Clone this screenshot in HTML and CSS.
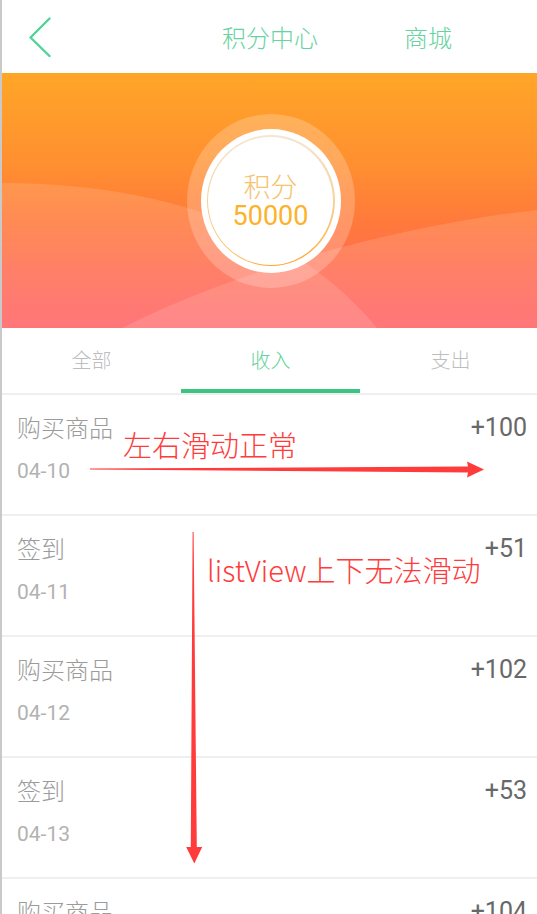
FILE: index.html
```html
<!DOCTYPE html>
<html lang="zh-CN">
<head>
<meta charset="utf-8">
<title>积分中心</title>
<link rel="stylesheet" href="styles.css">
</head>
<body>
<div class="phone">
  <header class="topbar">
    <svg class="back" width="24" height="40" viewBox="0 0 24 40" aria-hidden="true">
      <polyline points="20.5,1.5 1.5,20.5 20.5,39" fill="none" stroke="#4fd497" stroke-width="2.4" stroke-linecap="round" stroke-linejoin="round"/>
    </svg>
    <span class="title">积分中心</span>
    <span class="shop">商城</span>
  </header>

  <section class="banner">
    <svg class="waves" viewBox="0 0 535 255" preserveAspectRatio="none" aria-hidden="true">
      <path d="M0,110 C148,110 288,150 375,255 L0,255 Z" fill="rgba(255,255,255,0.13)"/>
      <path d="M535,137 C418,150 248,190 120,255 L535,255 Z" fill="rgba(255,255,255,0.13)"/>
    </svg>
    <div class="halo">
      <div class="disc">
        <div class="ring">
          <div class="ring-inner">
            <div class="label">积分</div>
            <div class="points">50000</div>
          </div>
        </div>
      </div>
    </div>
  </section>

  <nav class="tabs">
    <div class="tab">全部</div>
    <div class="tab active">收入</div>
    <div class="tab last">支出</div>
  </nav>

  <ul class="records">
    <li class="record">
      <div class="rec-title">购买商品</div>
      <div class="rec-amount">+100</div>
      <div class="rec-date">04-10</div>
    </li>
    <li class="record">
      <div class="rec-title">签到</div>
      <div class="rec-amount">+51</div>
      <div class="rec-date">04-11</div>
    </li>
    <li class="record">
      <div class="rec-title">购买商品</div>
      <div class="rec-amount">+102</div>
      <div class="rec-date">04-12</div>
    </li>
    <li class="record">
      <div class="rec-title">签到</div>
      <div class="rec-amount">+53</div>
      <div class="rec-date">04-13</div>
    </li>
    <li class="record">
      <div class="rec-title">购买商品</div>
      <div class="rec-amount">+104</div>
      <div class="rec-date">04-14</div>
    </li>
  </ul>

  <svg class="annot" width="537" height="914" viewBox="0 0 537 914" aria-hidden="true">
    <polygon points="90,468.6 468,466.6 467,461.5 484,469.5 467,477.5 468,472.4 90,469.6" fill="#ff3b3b"/>
    <polygon points="192.6,532 193.6,532 196.8,847 202.2,847 194.3,863.5 186.2,847 190.8,847" fill="#ff3b3b"/>
  </svg>
  <div class="note note-h">左右滑动正常</div>
  <div class="note note-v">listView上下无法滑动</div>
</div>
</body>
</html>
```
FILE: styles.css
```css
* { box-sizing: border-box; }

html, body {
  margin: 0;
  padding: 0;
  background: #ffffff;
}

.phone {
  position: relative;
  width: 537px;
  height: 914px;
  overflow: hidden;
  border-left: 2px solid #c9c9c9;
  background: #ffffff;
  font-family: "Noto Sans CJK SC", "Noto Sans", sans-serif;
}

/* header */
.topbar {
  height: 73px;
  display: flex;
  align-items: center;
  padding-left: 27px;
  background: #ffffff;
}
.back { display: block; flex: none; }
.title, .shop {
  font-size: 24px;
  line-height: 30px;
  font-weight: 300;
  color: #66d3a0;
}
.title { margin-left: 169px; }
.shop { margin-left: 86px; }

/* banner */
.banner {
  position: relative;
  height: 255px;
  display: flex;
  align-items: center;
  justify-content: center;
  background: linear-gradient(180deg, #ffa627 0%, #ff9030 35%, #ff7a3b 58%, #ff6d52 78%, #ff6266 100%);
  overflow: hidden;
}
.waves {
  position: absolute;
  left: 0;
  top: 0;
  width: 100%;
  height: 100%;
}
.halo {
  position: relative;
  width: 168px;
  height: 174px;
  border-radius: 50%;
  background: rgba(255, 255, 255, 0.22);
  display: flex;
  align-items: center;
  justify-content: center;
  margin-left: 2px;
}
.disc {
  width: 140px;
  height: 144px;
  border-radius: 50%;
  background: #ffffff;
  display: flex;
  align-items: center;
  justify-content: center;
}
.ring {
  width: 128px;
  height: 131px;
  border-radius: 50%;
  padding: 1.5px;
  background: linear-gradient(180deg, #f3e6d4 0%, #f7cf94 55%, #ffa62a 100%);
}
.ring-inner {
  width: 100%;
  height: 100%;
  border-radius: 50%;
  background: #ffffff;
  display: flex;
  flex-direction: column;
  align-items: center;
  justify-content: center;
  gap: 2px;
}
.label {
  font-size: 27px;
  line-height: 29px;
  font-weight: 300;
  color: #f6c26c;
}
.points {
  font-family: Roboto, "Noto Sans", sans-serif;
  font-size: 27px;
  line-height: 29px;
  color: #fdb22b;
}

/* tabs */
.tabs {
  display: grid;
  grid-template-columns: 179px 179px 1fr;
  border-bottom: 2px solid #efefef;
}
.tab {
  height: 65px;
  display: flex;
  align-items: center;
  justify-content: center;
  padding-bottom: 3px;
  font-size: 20px;
  font-weight: 300;
  color: #bdbdbd;
}
.tab.active {
  color: #5fd29c;
  box-shadow: inset 0 -4px 0 #3cc483;
}
.tab.last { padding-left: 4px; }

/* records */
.records {
  list-style: none;
  margin: 0;
  padding: 0;
}
.record {
  height: 121px;
  border-bottom: 2px solid #efefef;
  padding: 20px 10px 0 15px;
  display: grid;
  grid-template-columns: 1fr auto;
  grid-template-rows: 24px auto;
  row-gap: 21px;
}
.rec-title {
  font-size: 24px;
  line-height: 24px;
  font-weight: 300;
  color: #9b9b9b;
}
.rec-amount {
  font-family: Roboto, "Noto Sans", sans-serif;
  font-size: 25px;
  line-height: 24px;
  color: #686868;
  text-align: right;
  padding-top: 1px;
}
.rec-date {
  grid-column: 1 / 3;
  font-family: Roboto, "Noto Sans", sans-serif;
  font-size: 21px;
  line-height: 22px;
  color: #b2b2b2;
}

/* annotations drawn over the screenshot */
.annot {
  position: absolute;
  left: -2px;
  top: 0;
}
.note {
  position: absolute;
  font-size: 29px;
  line-height: 29px;
  font-weight: 300;
  color: #ff3b3b;
  white-space: nowrap;
}
.note-h { left: 121px; top: 430px; }
.note-v { left: 205px; top: 555px; }
```
